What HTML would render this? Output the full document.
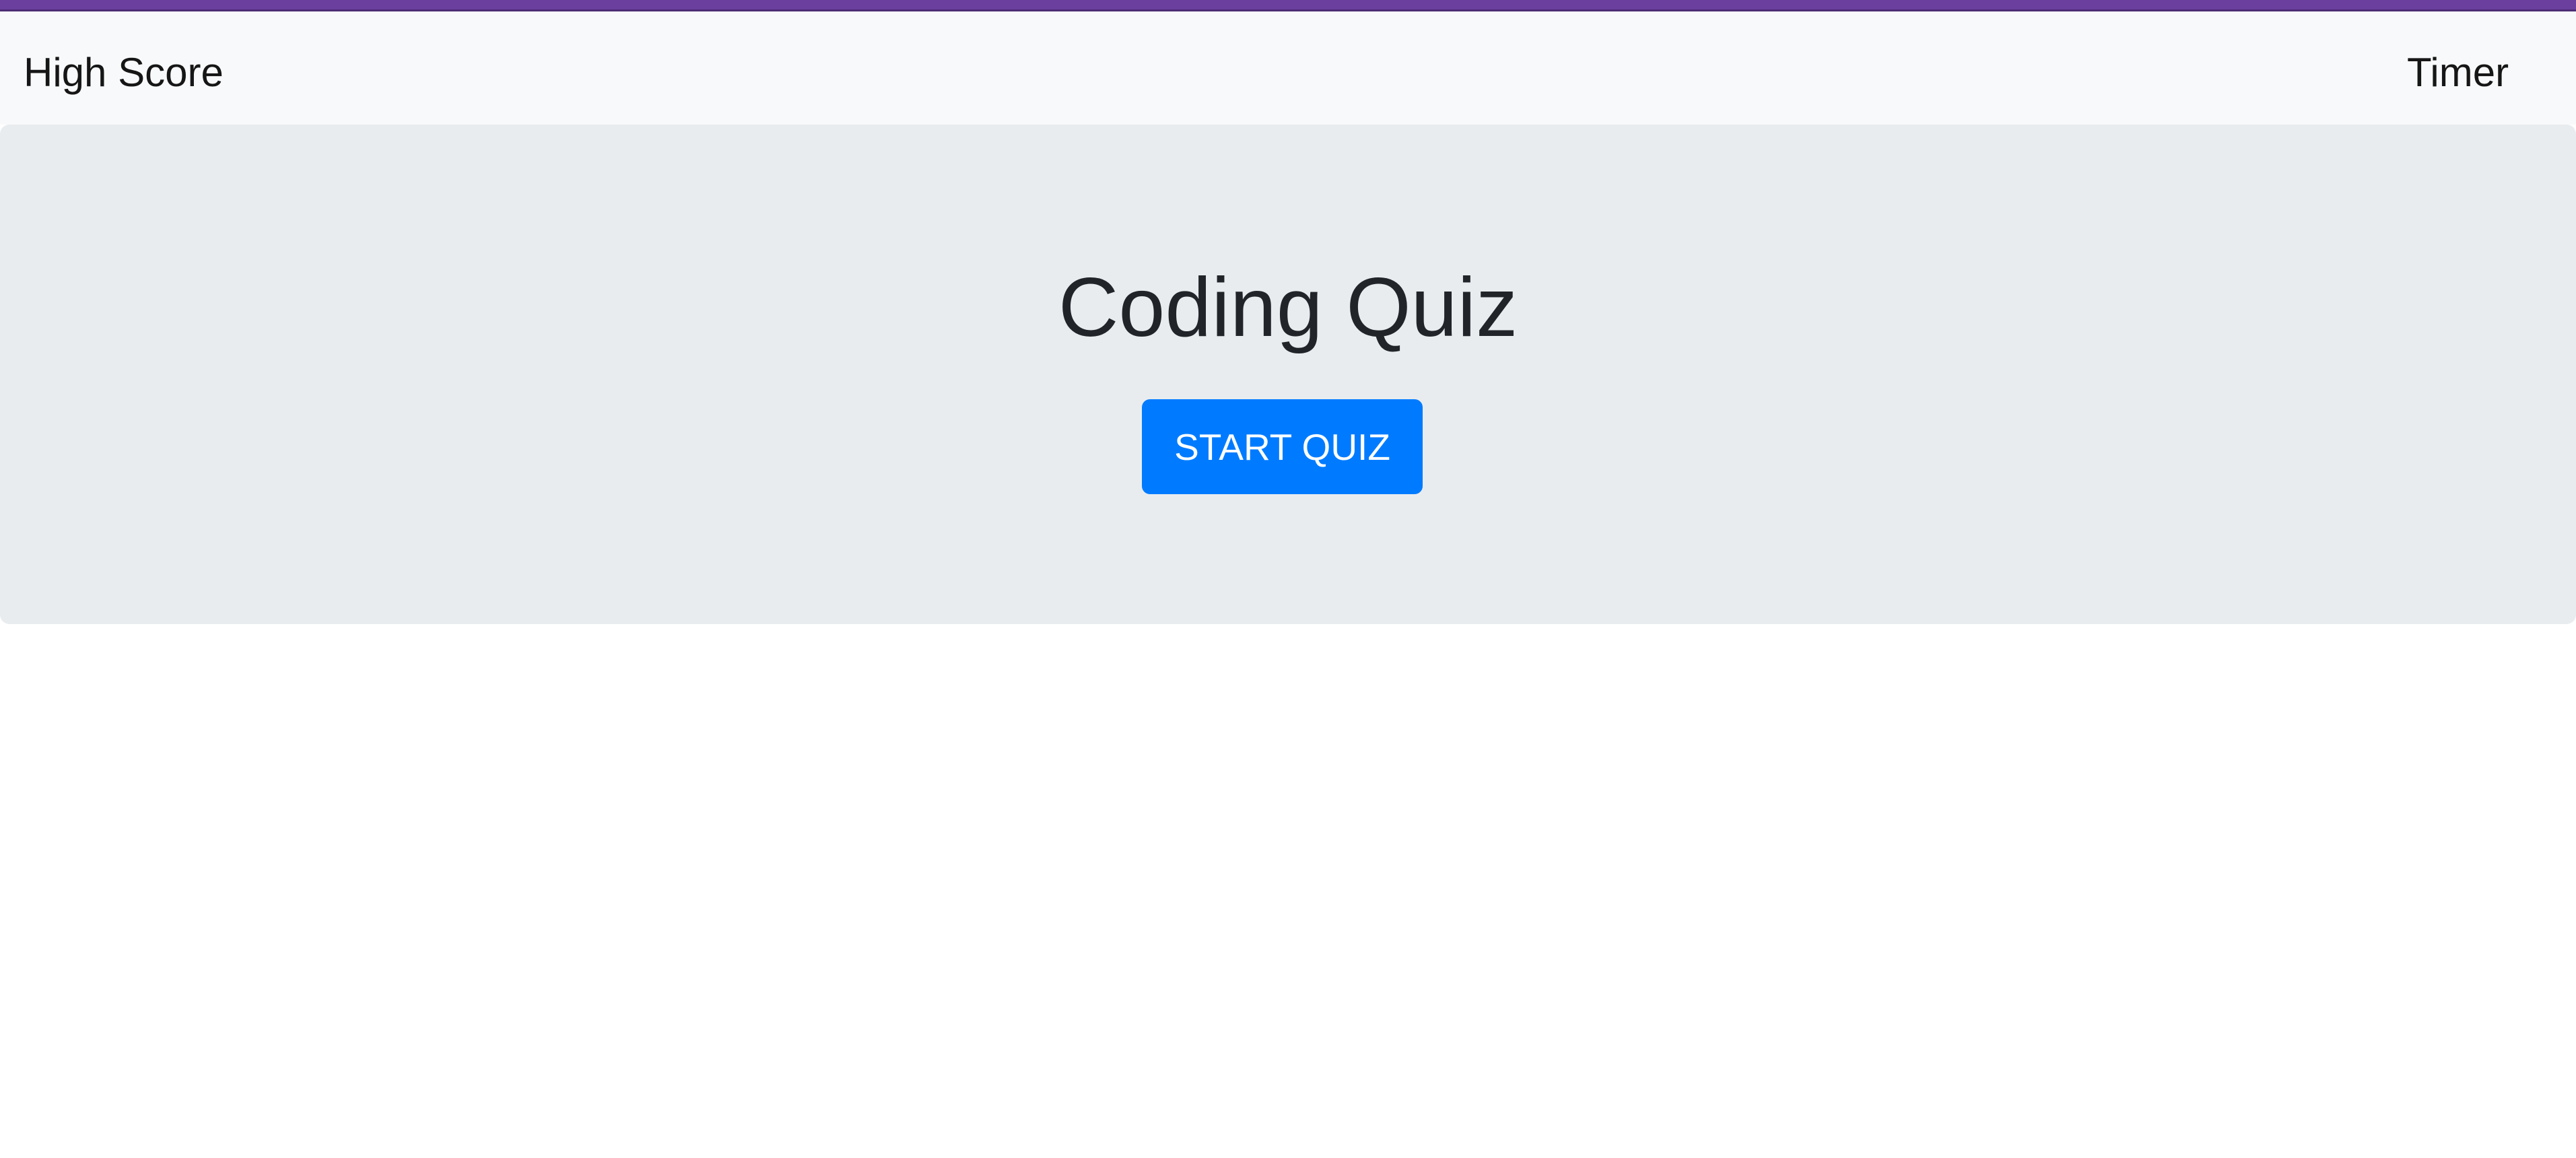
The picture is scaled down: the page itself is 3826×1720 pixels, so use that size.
<!DOCTYPE html>
<html><head><meta charset="utf-8"><style>
html,body{margin:0;padding:0;background:#fff;width:3826px;height:1720px;overflow:hidden;font-family:"Liberation Sans",sans-serif;}
.top{position:absolute;left:0;top:0;width:3826px;height:14px;background:#6b3f9e;}
.line{position:absolute;left:0;top:14px;width:3826px;height:3px;background:#4e2c74;}
.nav{position:absolute;left:0;top:17px;width:3826px;height:168px;background:#f8f9fa;}
.nav span{position:absolute;top:61px;font-size:60px;line-height:60px;color:#161616;}
.jumbo{position:absolute;left:0;top:185px;width:3826px;height:742px;background:#e9ecef;border-radius:14px;}
h1{position:absolute;left:0;width:3826px;top:377px;margin:0;text-align:center;font-weight:normal;font-size:124px;line-height:160px;color:#212529;}
.btn{position:absolute;left:1696px;top:593px;width:417px;height:141px;background:#007bff;border-radius:12px;color:#fff;font-size:55px;line-height:143px;text-align:center;}
</style></head><body>
<div class="top"></div><div class="line"></div>
<div class="nav"><span style="left:35px">High Score</span><span style="left:3575px">Timer</span></div>
<div class="jumbo"></div>
<h1>Coding Quiz</h1>
<div class="btn">START QUIZ</div>
</body></html>
